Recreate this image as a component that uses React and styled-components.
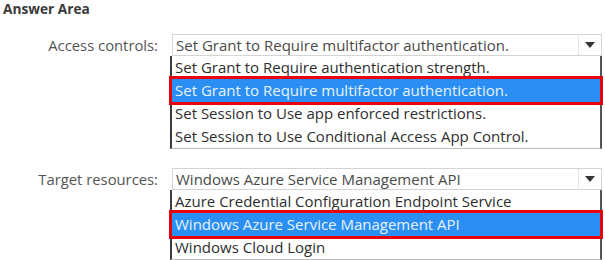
import React from "react";
import styled, { createGlobalStyle } from "styled-components";

const Global = createGlobalStyle`
  html, body { margin: 0; padding: 0; background: #ffffff; }
  body { font-family: "Open Sans", "Noto Sans", sans-serif; }
`;

const Page = styled.div`
  width: 605px;
  height: 260px;
  overflow: hidden;
  padding: 1px 0 0 3px;
  box-sizing: border-box;
`;

const Title = styled.div`
  font-size: 13.7px;
  font-weight: 700;
  color: #3a3a3a;
  line-height: 16px;
  height: 33px;
`;

const Group = styled.div`
  display: grid;
  grid-template-columns: 155px 430px;
  column-gap: 14px;
  margin-bottom: ${(p) => p.$gap || 0}px;
`;

const Label = styled.div`
  text-align: right;
  font-size: 14.8px;
  color: #555;
  line-height: 22px;
  white-space: nowrap;
`;

const Control = styled.div`
  display: flex;
  flex-direction: column;
`;

const Select = styled.div`
  display: flex;
  height: 22px;
  border: 1px solid #d4d4d4;
  box-sizing: border-box;
  background: #fff;
`;

const SelectText = styled.div`
  flex: 1;
  font-size: 15px;
  color: #4a4a4a;
  line-height: 21px;
  padding-left: 3px;
  white-space: nowrap;
  border-right: 1px solid #e6e6e6;
`;

const Arrow = styled.div`
  width: 22px;
  display: flex;
  align-items: center;
  justify-content: center;
`;

const List = styled.div`
  margin-left: -2px;
  border-left: 2px solid #3c3c3c;
  border-right: 2px solid #555;
  border-bottom: 1px solid #bdbdbd;
  background: #fff;
  display: flex;
  flex-direction: column;
`;

const Item = styled.div`
  height: 23px;
  line-height: 23px;
  font-size: 15px;
  padding-left: 3px;
  white-space: nowrap;
  color: ${(p) => (p.$selected ? "#e8f3ff" : "#2e2e2e")};
  background: ${(p) => (p.$selected ? "#2a8ef2" : "transparent")};
  outline: ${(p) => (p.$selected ? "3px solid #e8000b" : "none")};
  position: relative;
  z-index: ${(p) => (p.$selected ? 1 : 0)};
`;

const DropArrow = () => (
  <svg width="10" height="6" viewBox="0 0 10 6">
    <path d="M0 0 H10 L5 6 Z" fill="#333" />
  </svg>
);

const Dropdown = ({ value, options, selected }) => (
  <Control>
    <Select>
      <SelectText>{value}</SelectText>
      <Arrow>
        <DropArrow />
      </Arrow>
    </Select>
    <List>
      {options.map((o, i) => (
        <Item key={o} $selected={i === selected}>
          {o}
        </Item>
      ))}
    </List>
  </Control>
);

export default function App() {
  return (
    <Page>
      <Global />
      <Title>Answer Area</Title>
      <Group $gap={19}>
        <Label>Access controls:</Label>
        <Dropdown
          value="Set Grant to Require multifactor authentication."
          selected={1}
          options={[
            "Set Grant to Require authentication strength.",
            "Set Grant to Require multifactor authentication.",
            "Set Session to Use app enforced restrictions.",
            "Set Session to Use Conditional Access App Control.",
          ]}
        />
      </Group>
      <Group>
        <Label>Target resources:</Label>
        <Dropdown
          value="Windows Azure Service Management API"
          selected={1}
          options={[
            "Azure Credential Configuration Endpoint Service",
            "Windows Azure Service Management API",
            "Windows Cloud Login",
          ]}
        />
      </Group>
    </Page>
  );
}
